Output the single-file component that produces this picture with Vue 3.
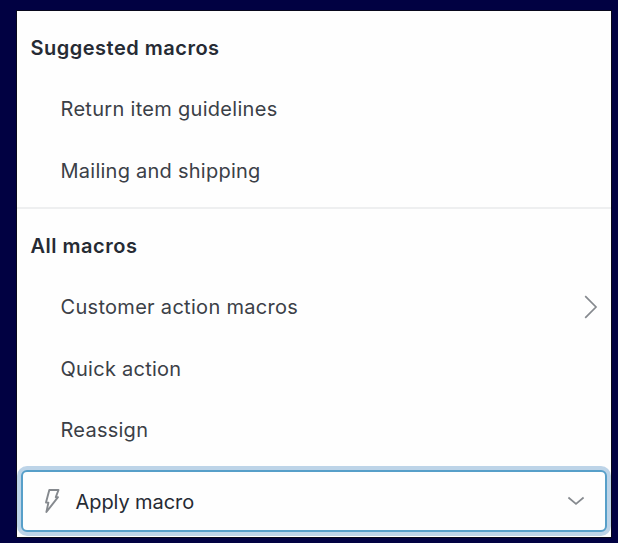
<template>
  <div class="page">
    <div class="panel">
      <section class="group">
        <h2>Suggested macros</h2>
        <ul>
          <li v-for="item in suggested" :key="item.label" :class="item.spacing">
            <span>{{ item.label }}</span>
          </li>
        </ul>
      </section>

      <section class="group all">
        <h2>All macros</h2>
        <ul>
          <li v-for="item in macros" :key="item.label" :class="item.spacing">
            <span>{{ item.label }}</span>
            <svg v-if="item.children" class="arrow" width="14" height="26" viewBox="0 0 14 26">
              <path d="M1.2 2.2 12 13 1.2 23.8" />
            </svg>
          </li>
        </ul>
      </section>

      <button class="apply" type="button">
        <svg class="bolt" width="18" height="26" viewBox="0 0 18 26">
          <path d="M7.3 2H16.5L13.8 9.2H16L4.4 24 6.4 14.6H4Z" />
        </svg>
        <span>Apply macro</span>
        <svg class="chevron" width="18" height="10" viewBox="0 0 18 10">
          <path d="M1.4 1.5 9 7.8 16.6 1.5" />
        </svg>
      </button>
    </div>
  </div>
</template>

<script setup>
const suggested = [
  { label: "Return item guidelines", spacing: "wide" },
  { label: "Mailing and shipping", spacing: "normal" },
];

const macros = [
  { label: "Customer action macros", spacing: "wide", children: true },
  { label: "Quick action", spacing: "normal" },
  { label: "Reassign", spacing: "normal" },
];
</script>

<style>
body {
  margin: 0;
  background: #010142;
}
</style>

<style scoped>
.page {
  box-sizing: border-box;
  height: 543px;
  padding: 11px 7px 6px 17px;
  overflow: hidden;
  background: #010142;
  font-family: Inter, "Liberation Sans", sans-serif;
}

.panel {
  box-sizing: border-box;
  height: 526px;
  padding-top: 6px;
  background: #fefefe;
  box-shadow: 0 0 0 1px #08081c;
}

h2 {
  height: 61.5px;
  margin: 0;
  padding-left: 13.5px;
  font-size: 20px;
  font-weight: 600;
  line-height: 63px;
  letter-spacing: 0.5px;
  color: #262b34;
}

ul {
  margin: 0;
  padding: 0;
  list-style: none;
}

li {
  display: flex;
  align-items: center;
  justify-content: space-between;
  height: 61.5px;
  padding: 0 13.5px 0 43.5px;
  font-size: 20px;
  font-weight: 370;
  color: #3b4047;
}

.normal {
  letter-spacing: 0.25px;
}

.wide {
  letter-spacing: 0.3px;
}

.all {
  margin-top: 5.5px;
  padding-top: 6px;
  border-top: 2px solid #eeeff0;
}

svg {
  display: block;
  fill: none;
  stroke: #85898e;
  stroke-width: 1.7;
}

.apply {
  display: flex;
  align-items: center;
  box-sizing: border-box;
  width: 586px;
  height: 62px;
  margin: 9px 0 0 4px;
  padding: 0 20px 0 19px;
  border: 2px solid #579fc9;
  border-radius: 6px;
  background: #fefefe;
  box-shadow: 0 0 0 4px #bdd4e8;
  font-family: inherit;
  font-size: 20px;
  color: #262b34;
}

.apply span {
  padding-top: 1px;
  letter-spacing: -0.08px;
}

.bolt {
  margin-right: 15.5px;
  stroke-width: 1.9;
  stroke-linejoin: round;
}

.chevron {
  margin-left: auto;
}
</style>
